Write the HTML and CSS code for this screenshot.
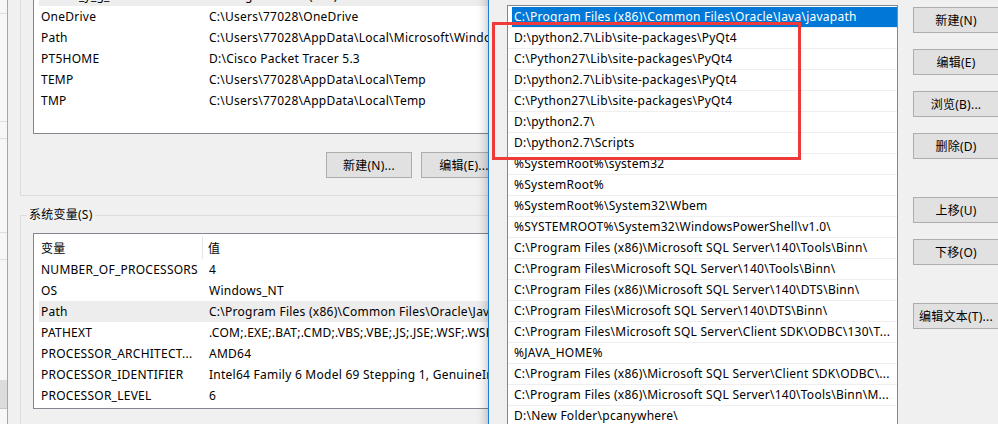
FILE: index.html
```html
<!DOCTYPE html>
<html lang="zh-CN">
<head>
<meta charset="utf-8">
<title>环境变量</title>
<link rel="stylesheet" href="styles.css">
</head>
<body>
<div class="desktop">
  <div class="bgwin">
    <div class="seg s1"></div>
    <div class="seg s2"></div>
    <div class="seg s3"></div>
    <div class="seg s4"></div>
    <div class="seg s5"></div>
    <div class="seg s6"></div>
    <div class="seg band"></div>
  </div>

  <div class="win envwin">
    <div class="group user-group">
      <div class="list user-list">
        <div class="hdr"><span class="hname">变量</span><span class="hval">值</span></div>
        <div class="row"><span class="name">MOZ_PLUGIN_PATH</span><span class="val">C:\Program Files (x86)\Foxit Software\Foxit Reader\plugins\</span></div>
        <div class="row hl"><span class="name">Oracle_y_g_Path</span><span class="val">C:\Program Files (x86)\Foxit Software\Foxit Reader\plugins\</span></div>
        <div class="row"><span class="name">OneDrive</span><span class="val">C:\Users\77028\OneDrive</span></div>
        <div class="row"><span class="name">Path</span><span class="val">C:\Users\77028\AppData\Local\Microsoft\WindowsApps;</span></div>
        <div class="row"><span class="name">PT5HOME</span><span class="val">D:\Cisco Packet Tracer 5.3</span></div>
        <div class="row"><span class="name">TEMP</span><span class="val">C:\Users\77028\AppData\Local\Temp</span></div>
        <div class="row"><span class="name">TMP</span><span class="val">C:\Users\77028\AppData\Local\Temp</span></div>
      </div>
      <div class="btnrow">
        <button class="btn">新建(N)...</button>
        <button class="btn">编辑(E)...</button>
        <button class="btn">删除(D)</button>
      </div>
    </div>

    <div class="group sys-group">
      <span class="legend">系统变量(S)</span>
      <div class="list sys-list">
        <div class="hdr"><span class="hname">变量</span><span class="hval">值</span></div>
        <div class="row"><span class="name">NUMBER_OF_PROCESSORS</span><span class="val">4</span></div>
        <div class="row"><span class="name">OS</span><span class="val">Windows_NT</span></div>
        <div class="row hl"><span class="name">Path</span><span class="val">C:\Program Files (x86)\Common Files\Oracle\Java\javapath;C:\Python27</span></div>
        <div class="row"><span class="name">PATHEXT</span><span class="val">.COM;.EXE;.BAT;.CMD;.VBS;.VBE;.JS;.JSE;.WSF;.WSH;.MSC</span></div>
        <div class="row"><span class="name">PROCESSOR_ARCHITECT...</span><span class="val">AMD64</span></div>
        <div class="row"><span class="name">PROCESSOR_IDENTIFIER</span><span class="val">Intel64 Family 6 Model 69 Stepping 1, GenuineIntel</span></div>
        <div class="row"><span class="name">PROCESSOR_LEVEL</span><span class="val">6</span></div>
      </div>
    </div>
  </div>

  <div class="win editwin">
    <div class="plist">
      <div class="pitem sel"><span>C:\Program Files (x86)\Common Files\Oracle\Java\javapath</span></div>
      <div class="pitem"><span>D:\python2.7\Lib\site-packages\PyQt4</span></div>
      <div class="pitem"><span>C:\Python27\Lib\site-packages\PyQt4</span></div>
      <div class="pitem"><span>D:\python2.7\Lib\site-packages\PyQt4</span></div>
      <div class="pitem"><span>C:\Python27\Lib\site-packages\PyQt4</span></div>
      <div class="pitem"><span>D:\python2.7\</span></div>
      <div class="pitem"><span>D:\python2.7\Scripts</span></div>
      <div class="pitem"><span>%SystemRoot%\system32</span></div>
      <div class="pitem"><span>%SystemRoot%</span></div>
      <div class="pitem"><span>%SystemRoot%\System32\Wbem</span></div>
      <div class="pitem"><span>%SYSTEMROOT%\System32\WindowsPowerShell\v1.0\</span></div>
      <div class="pitem"><span>C:\Program Files (x86)\Microsoft SQL Server\140\Tools\Binn\</span></div>
      <div class="pitem"><span>C:\Program Files\Microsoft SQL Server\140\Tools\Binn\</span></div>
      <div class="pitem"><span>C:\Program Files (x86)\Microsoft SQL Server\140\DTS\Binn\</span></div>
      <div class="pitem"><span>C:\Program Files\Microsoft SQL Server\140\DTS\Binn\</span></div>
      <div class="pitem"><span>C:\Program Files\Microsoft SQL Server\Client SDK\ODBC\130\T...</span></div>
      <div class="pitem"><span>%JAVA_HOME%</span></div>
      <div class="pitem"><span>C:\Program Files (x86)\Microsoft SQL Server\Client SDK\ODBC\...</span></div>
      <div class="pitem"><span>C:\Program Files (x86)\Microsoft SQL Server\140\Tools\Binn\M...</span></div>
      <div class="pitem"><span>D:\New Folder\pcanywhere\</span></div>
    </div>
    <div class="side">
      <button class="btn sbtn">新建(N)</button>
      <button class="btn sbtn">编辑(E)</button>
      <button class="btn sbtn">浏览(B)...</button>
      <button class="btn sbtn">删除(D)</button>
      <button class="btn sbtn gap">上移(U)</button>
      <button class="btn sbtn">下移(O)</button>
      <button class="btn sbtn gap">编辑文本(T)...</button>
    </div>
  </div>

  <div class="redbox"></div>
</div>
</body>
</html>
```

FILE: styles.css
```css
* { box-sizing: border-box; }
html, body { margin: 0; padding: 0; }
body {
  width: 998px;
  height: 424px;
  overflow: hidden;
  background: #f0f0f0;
  font-family: "Noto Sans", "Noto Sans CJK SC", sans-serif;
  font-size: 12px;
  letter-spacing: 0.25px;
  color: #000;
}
.desktop {
  position: relative;
  width: 998px;
  height: 424px;
  overflow: hidden;
}

/* background window strip on the far left */
.bgwin {
  position: absolute;
  left: 0;
  top: 0;
  width: 8px;
  height: 424px;
  background: #f7f7f7;
  display: flex;
  flex-direction: column;
}
.seg { border-bottom: 1px solid #dedede; flex: none; }
.s1 { height: 14px; }
.s2 { height: 108px; }
.s3 { height: 17px; }
.s4 { height: 94px; }
.s5 { height: 27px; }
.s6 { height: 121px; }
.band { height: 28px; background: #dcdcdc; border-bottom: 1px solid #c8c8c8; }

.win { position: absolute; background: #f0f0f0; }

/* environment variables window */
.envwin {
  left: 7px;
  top: -80px;
  width: 620px;
  height: 540px;
  border-left: 1px solid #a6a6a6;
  padding: 8px 12px 0 12px;
  z-index: 1;
}
.group {
  position: relative;
  border: 1px solid #dcdcdc;
  padding: 9px 12px 17px 12px;
}
.sys-group { margin-top: 19px; padding-top: 17px; }
.legend {
  position: absolute;
  left: 6px;
  top: -9px;
  padding: 0 2px;
  line-height: 16px;
  background: #f0f0f0;
}
.list {
  background: #fff;
  border: 1px solid #828790;
  overflow: hidden;
}
.user-list { height: 196px; }
.sys-list { height: 176px; }
.hdr {
  display: flex;
  height: 25px;
  align-items: stretch;
}
.hname {
  width: 169px;
  padding-left: 7px;
  border-right: 1px solid #e5e5e5;
  display: flex;
  align-items: center;
  margin: 2px 0 0 0;
}
.hval {
  padding-left: 5px;
  display: flex;
  align-items: center;
  margin-top: 2px;
}
.row {
  display: flex;
  height: 21px;
  line-height: 21px;
  margin-left: 5px;
  white-space: nowrap;
}
.row.hl { background: #ededed; }
.name {
  flex: none;
  width: 170px;
  padding-left: 2px;
  overflow: hidden;
}
.val { flex: none; }

.btnrow {
  display: flex;
  justify-content: flex-end;
  gap: 9px;
  margin-top: 18px;
}
.btn {
  font: inherit;
  letter-spacing: inherit;
  color: #000;
  background: #e1e1e1;
  border: 1px solid #adadad;
  border-radius: 0;
  width: 86px;
  height: 26px;
  padding: 0;
  margin: 0;
  white-space: nowrap;
}

/* edit environment variable window */
.editwin {
  left: 488px;
  top: -30px;
  width: 560px;
  height: 520px;
  border: 1px solid #1b7fd6;
  box-shadow: 0 0 11px rgba(0, 0, 0, 0.32);
  z-index: 2;
  display: flex;
  align-items: flex-start;
  padding: 34px 0 0 18px;
}
.plist {
  width: 391px;
  height: 480px;
  background: #fff;
  border: 1px solid #828790;
  padding-top: 1px;
  overflow: hidden;
  flex: none;
}
.pitem {
  height: 21px;
  border-bottom: 1px solid #efefef;
  padding-left: 4px;
  white-space: nowrap;
}
.pitem span {
  display: block;
  height: 20px;
  line-height: 20px;
  padding-left: 2px;
  overflow: hidden;
}
.pitem.sel span { background: #0078d7; color: #fff; }

.side {
  display: flex;
  flex-direction: column;
  gap: 16px;
  margin-left: 15px;
  padding-top: 2px;
}
.sbtn.gap { margin-top: 22px; }

.redbox {
  position: absolute;
  left: 492px;
  top: 22px;
  width: 309px;
  height: 138px;
  border: 3px solid #ef3a3a;
  z-index: 3;
}
```
